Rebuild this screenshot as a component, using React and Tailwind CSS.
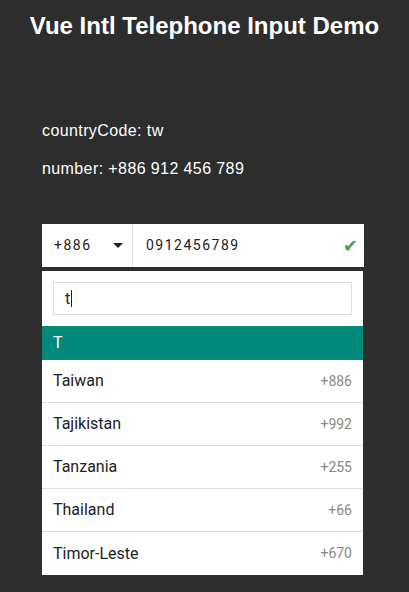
import React from 'react';

const countries = [
  { name: 'Taiwan', code: '+886' },
  { name: 'Tajikistan', code: '+992' },
  { name: 'Tanzania', code: '+255' },
  { name: 'Thailand', code: '+66' },
  { name: 'Timor-Leste', code: '+670' },
];

const App = () => {
  return (
    <div className="min-h-[592px] bg-[#2d2d2d] text-white font-['Liberation_Sans',Arial,sans-serif]">
      <h1 className="pt-[12px] text-center text-[24px] font-bold leading-[28px]">
        Vue Intl Telephone Input Demo
      </h1>

      <div className="mt-[82px] px-[42px] text-[16px] leading-[18px] tracking-[0.4px]">
        <p>countryCode: tw</p>
        <p className="mt-[20px]">number: +886 912 456 789</p>
      </div>

      <div className="mt-[46px] mx-[42px] w-[322px] font-['Roboto',sans-serif]">
        <div className="flex h-[43px] bg-white text-[#222]">
          <div className="flex w-[91px] items-center justify-between border-r border-[#ddd] pl-[12px] pr-[9px]">
            <span className="text-[14px] tracking-[1.5px]">+886</span>
            <span className="h-0 w-0 border-x-[5px] border-t-[5px] border-x-transparent border-t-[#222]" />
          </div>
          <div className="flex flex-1 items-center justify-between pl-[13px] pr-[6px]">
            <span className="text-[14px] tracking-[1.5px]">0912456789</span>
            <span className="text-[18px] leading-none text-[#43a047]">✔</span>
          </div>
        </div>

        <div className="mt-[4px] w-[321px] bg-white pt-[11px] text-[16px]">
          <div className="mx-[11px] flex h-[33px] items-center border border-[#ddd] px-[11px] text-[#222]">
            <span>t</span>
            <span className="ml-[1px] h-[17px] w-px bg-[#222]" />
          </div>
          <div className="mt-[11px] flex h-[34px] items-center bg-[#00897b] px-[11px] text-[16px] text-white">
            T
          </div>
          {countries.map((c, i) => (
            <div
              key={c.name}
              className={`flex h-[43px] items-center justify-between px-[11px] ${i < countries.length - 1 ? 'border-b border-[#ddd]' : ''}`}
            >
              <span className="text-[#222]">{c.name}</span>
              <span className="text-[14px] text-[#888]">{c.code}</span>
            </div>
          ))}
        </div>
      </div>
    </div>
  );
};

export default App;
